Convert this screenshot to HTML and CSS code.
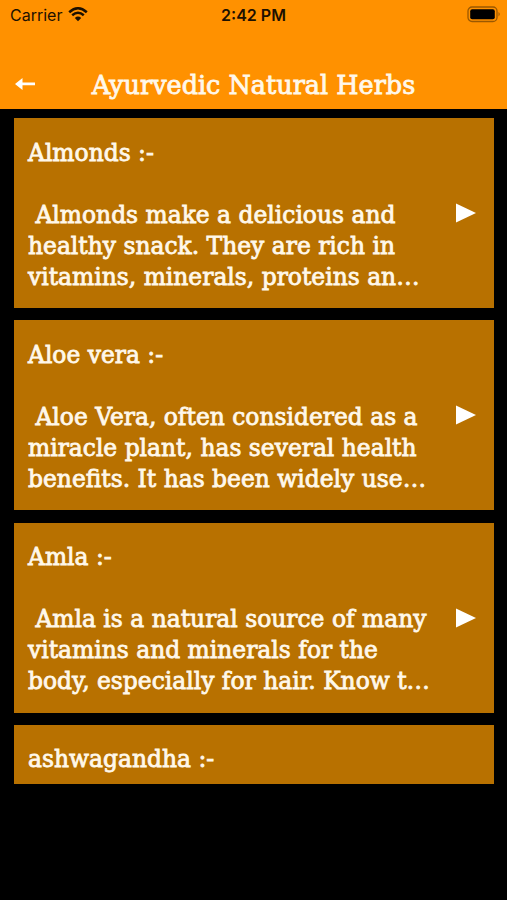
FILE: index.html
```html
<!DOCTYPE html>
<html lang="en">
<head>
  <meta charset="UTF-8">
  <title>Ayurvedic Natural Herbs</title>
  <link rel="stylesheet" href="styles.css">
</head>
<body>

<div class="header">
  <div class="status-bar">
    <div class="carrier">
      <span>Carrier</span>
      <svg class="wifi" width="20" height="15" viewBox="0 0 20 15">
        <path d="M1.2 5.2 Q10 -2.6 18.800 5.2" />
        <path d="M4.200 8.300 Q10 3.300 15.800 8.300" />
        <path class="dot" d="M6.800 11 Q10 8.200 13.200 11 L10 14.300 Z" />
      </svg>
    </div>
    <div class="time">2:42 PM</div>
    <svg class="battery" width="34" height="17" viewBox="0 0 34 17">
      <rect class="shell" x="1" y="1" width="29" height="14.500" rx="4" />
      <rect x="3.200" y="3.200" width="24.600" height="10" rx="2" />
      <path class="tip" d="M31.500 6 Q34 8.200 31.500 10.500 Z" />
    </svg>
  </div>
  <div class="nav-bar">
    <svg class="back" width="21" height="14" viewBox="0 0 21 14">
      <path d="M0 6 L7.500 0 V4.600 H20 V7.300 H7.500 V12 Z" />
    </svg>
    <h1>Ayurvedic Natural Herbs</h1>
  </div>
</div>

<div class="herb-list">
  <div class="card">
    <div class="text">
      <h2>Almonds :-</h2>
      <p>&nbsp;Almonds make a delicious and<br>healthy snack. They are rich in<br>vitamins, minerals, proteins an…</p>
    </div>
    <svg class="arrow" width="20" height="20" viewBox="0 0 20 20"><path d="M0 0.500 L20 10 L0 19.500 Z" /></svg>
  </div>

  <div class="card">
    <div class="text">
      <h2>Aloe vera :-</h2>
      <p>&nbsp;Aloe Vera, often considered as a<br>miracle plant, has several health<br>benefits. It has been widely use…</p>
    </div>
    <svg class="arrow" width="20" height="20" viewBox="0 0 20 20"><path d="M0 0.500 L20 10 L0 19.500 Z" /></svg>
  </div>

  <div class="card">
    <div class="text">
      <h2>Amla :-</h2>
      <p>&nbsp;Amla is a natural source of many<br>vitamins and minerals for the<br>body, especially for hair. Know t…</p>
    </div>
    <svg class="arrow" width="20" height="20" viewBox="0 0 20 20"><path d="M0 0.500 L20 10 L0 19.500 Z" /></svg>
  </div>

  <div class="card last">
    <div class="text">
      <h2>ashwagandha :-</h2>
    </div>
  </div>
</div>

</body>
</html>
```

FILE: styles.css
```css
* {
  box-sizing: border-box;
}
body {
  margin: 0;
  height: 900px;
  overflow: hidden;
  background: #000;
  color: #fff8ea;
  font-family: "DejaVu Serif", serif;
}
h1, h2, p {
  margin: 0;
  font-size: 23.4px;
  line-height: 31px;
  font-weight: normal;
  white-space: nowrap;
  -webkit-text-stroke: 0.8px #fff8ea;
}
.header {
  height: 108.5px;
  background: #ff9100;
}
.status-bar {
  display: grid;
  grid-template-columns: 1fr auto 1fr;
  align-items: center;
  height: 29px;
  padding: 0 6px 0 10px;
  color: #1c1000;
  font-family: Inter, sans-serif;
  font-size: 16px;
}
.carrier {
  display: flex;
  align-items: center;
  gap: 6px;
}
.wifi path {
  fill: none;
  stroke: #1c1000;
  stroke-width: 2.5;
}
.wifi .dot {
  fill: #1c1000;
  stroke: none;
}
.time {
  margin-right: 4px;
  font-weight: 600;
}
.battery {
  justify-self: end;
}
.battery .shell {
  fill: none;
  stroke: #9a5800;
  stroke-width: 1.3;
}
.battery .tip {
  fill: #9a5800;
}
.nav-bar {
  display: grid;
  grid-template-columns: 50px 1fr 50px;
  align-items: center;
  height: 31px;
  margin-top: 40px;
}
.back {
  margin-left: 15px;
}
.back path, .arrow path {
  fill: #fff;
}
.nav-bar h1 {
  padding-top: 1px;
  text-align: center;
  font-size: 25.5px;
}
.herb-list {
  display: flex;
  flex-direction: column;
  gap: 12.2px;
  height: 675.5px;
  padding: 9.7px 13.5px 0 14px;
  overflow: hidden;
}
.card {
  display: flex;
  flex-shrink: 0;
  align-items: center;
  justify-content: space-between;
  height: 190px;
  padding: 0 18px 0 14px;
  background: #b87100;
}
.card .text {
  padding-top: 4px;
}
.card h2 {
  margin-bottom: 31px;
}
.card.last {
  align-items: flex-start;
  padding-top: 15.5px;
}
```
